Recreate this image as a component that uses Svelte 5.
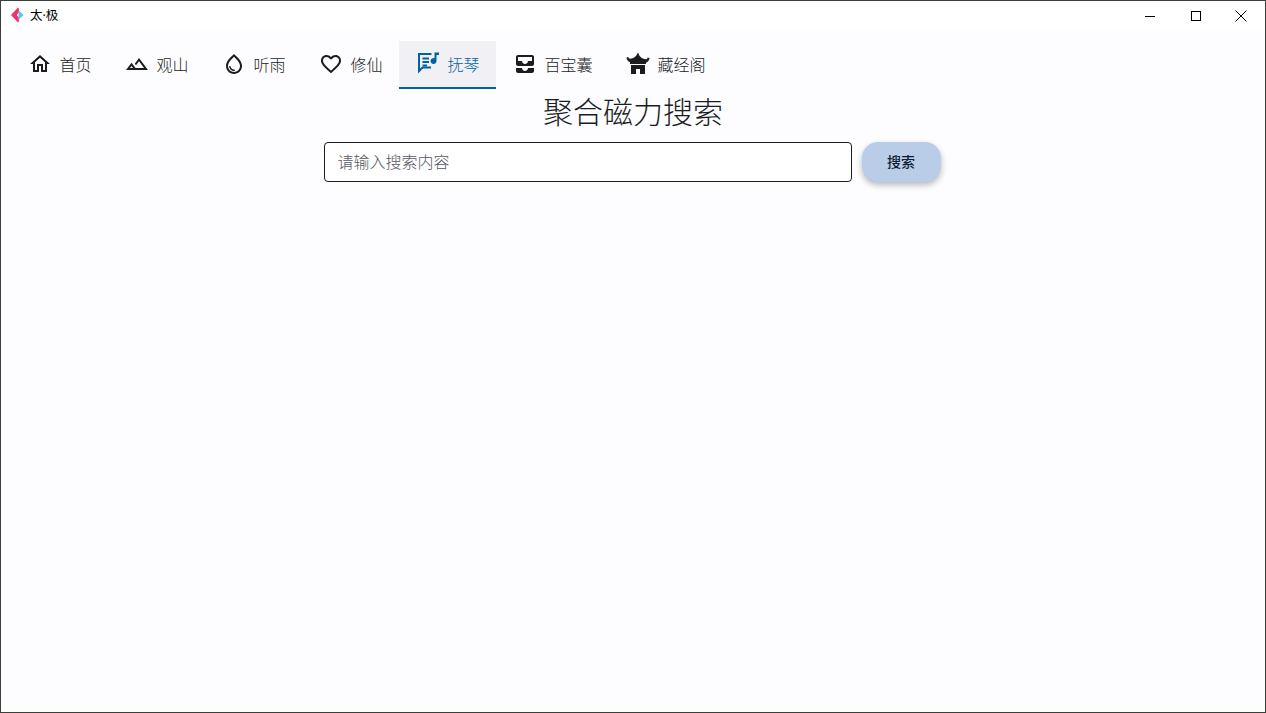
<script>
  const tabs = [
    { label: '首页', icon: 'home' },
    { label: '观山', icon: 'terrain' },
    { label: '听雨', icon: 'drop' },
    { label: '修仙', icon: 'heart' },
    { label: '抚琴', icon: 'lyrics', active: true },
    { label: '百宝囊', icon: 'inbox' },
    { label: '藏经阁', icon: 'temple' }
  ];

  const icons = {
    home: 'M12 5.69l5 4.5V18h-2v-6H9v6H7v-7.81l5-4.5M12 3L2 12h3v8h6v-6h2v6h6v-8h3L12 3z',
    terrain: 'M14 6l-4.22 5.63 1.25 1.67L14 9.33 19 16h-8.46l-4.01-5.37L1 18h22L14 6zM5 16l1.52-2.03L8.04 16H5z',
    drop: 'M12,2c-5.33,4.55-8,8.48-8,11.8c0,4.98,3.8,8.2,8,8.2s8-3.22,8-8.2C20,10.48,17.33,6.55,12,2z M12,20c-3.35,0-6-2.57-6-6.2c0-2.34,1.95-5.44,6-9.14c4.05,3.7,6,6.79,6,9.14C18,17.43,15.35,20,12,20z M7.83,14c0.37,0,0.67,0.26,0.74,0.62c0.41,2.22,2.28,2.98,3.64,2.87c0.43-0.02,0.79,0.32,0.79,0.75c0,0.4-0.32,0.73-0.72,0.75c-2.13,0.13-4.62-1.09-5.19-4.12C7.01,14.42,7.37,14,7.83,14z',
    heart: 'M16.5 3c-1.74 0-3.41.81-4.5 2.09C10.91 3.81 9.24 3 7.5 3 4.42 3 2 5.42 2 8.5c0 3.78 3.4 6.86 8.55 11.54L12 21.35l1.45-1.32C18.6 15.36 22 12.28 22 8.5 22 5.42 19.58 3 16.5 3zm-4.4 15.55l-.1.1-.1-.1C7.14 14.24 4 11.39 4 8.5 4 6.5 5.5 5 7.5 5c1.54 0 3.04.99 3.57 2.36h1.87C13.46 5.99 14.96 5 16.5 5c2 0 3.5 1.5 3.5 3.5 0 2.89-3.14 5.74-7.9 10.05z',
    lyrics: 'M2 2h13.500v2H4v13.600L6.200 15.400H15v2H7l-5 5V2zM6.500 6.500H13v2H6.500zM6.500 10H13v2H6.500zM6.500 13.500H11v1.800H6.500zM18.500 1.500H23v2.400h-2.500V10a3 3 0 1 1-2-2.800V1.500z',
    inbox: 'M19 3H5c-1.100 0-2 .9-2 2v7c0 1.100.9 2 2 2h14c1.100 0 2-.9 2-2V5c0-1.100-.9-2-2-2zm0 6h-4c0 1.620-1.380 3-3 3s-3-1.380-3-3H5V5h14v4zm-4 7h6v3c0 1.100-.9 2-2 2H5c-1.100 0-2-.9-2-2v-3h6c0 1.660 1.340 3 3 3s3-1.340 3-3z',
    temple: 'M12 0.500l1.600 3.500c2 2.200 4.300 3.200 6.600 3.200.7 0 1.200-.7 1.400-1.700l1.900.5c-.3 2.400-1.500 4-3.500 4.800V12H4.000v-1.700C2 9.500.8 7.900.5 5.500l1.900-.5c.2 1 .7 1.700 1.400 1.700 2.300 0 4.600-1 6.600-3.200L12 0.500zM5 13h14v9h-5v-5h-4v5H5v-9z'
  };
</script>

<div class="window">
  <header class="titlebar">
    <div class="brand">
      <svg class="logo" viewBox="0 0 14 16" width="14" height="16" aria-hidden="true">
        <path d="M13.500 8 8.500 3.200v9.600z" fill="#5cc1f4" />
        <path d="M8 0.500 1 8l7 7.500c.8-.6 1-1.300 1-2.200l-.5-3L6.800 8l1.700-2.300.5-3c0-.9-.2-1.600-1-2.200z" fill="#f0336f" />
      </svg>
      <span class="app-name">太·极</span>
    </div>
    <div class="controls">
      <button aria-label="最小化">
        <svg viewBox="0 0 12 12" width="12" height="12"><path d="M1 6.500h10" stroke="#000" fill="none" /></svg>
      </button>
      <button aria-label="最大化">
        <svg viewBox="0 0 12 12" width="12" height="12"><rect x="1.500" y="1.500" width="9" height="9" stroke="#000" fill="none" /></svg>
      </button>
      <button aria-label="关闭">
        <svg viewBox="0 0 12 12" width="12" height="12"><path d="M.5.500l11 11M11.500.500l-11 11" stroke="#000" fill="none" /></svg>
      </button>
    </div>
  </header>

  <nav class="tabs">
    {#each tabs as tab}
      <div class="tab" class:active={tab.active}>
        <svg viewBox="0 0 24 24" width="24" height="24" aria-hidden="true"><path d={icons[tab.icon]} /></svg>
        <span>{tab.label}</span>
      </div>
    {/each}
  </nav>

  <main class="page">
    <h1>聚合磁力搜索</h1>
    <div class="search">
      <input type="text" placeholder="请输入搜索内容" />
      <button class="go">搜索</button>
    </div>
  </main>
</div>

<style>
  :global(body) {
    background: #fdfcff;
  }

  .window {
    height: 713px;
    box-sizing: border-box;
    display: flex;
    flex-direction: column;
    border: 1px solid #3a3f3a;
    background: #fdfcff;
    font-family: "Noto Sans CJK SC", "Noto Sans", sans-serif;
    overflow: hidden;
  }

  .titlebar {
    height: 29px;
    flex: none;
    display: flex;
    justify-content: space-between;
    background: #fff;
  }

  .brand {
    display: flex;
    align-items: center;
    gap: 6px;
    padding-left: 9px;
    padding-bottom: 2px;
  }

  .app-name {
    font-family: "Noto Sans", "Noto Sans CJK SC", sans-serif;
    font-size: 12.500px;
    color: #000;
  }

  .controls {
    display: flex;
    margin-right: 1px;
  }

  .controls button {
    width: 45.500px;
    padding: 0;
    border: 0;
    background: none;
    display: flex;
    align-items: center;
    justify-content: center;
  }

  .tabs {
    display: flex;
    margin-top: 11px;
    padding-left: 10px;
  }

  .tab {
    height: 48px;
    box-sizing: border-box;
    display: flex;
    align-items: center;
    gap: 8px;
    padding: 0 16.500px 2px;
    color: #1a1c1e;
    font-size: 16px;
    font-weight: 300;
    line-height: 24px;
  }

  .tab svg {
    fill: #1a1c1e;
  }

  .tab.active {
    background: #f1f0f4;
    border-bottom: 2px solid #0061a4;
    padding-bottom: 0;
    color: #0061a4;
  }

  .tab.active svg {
    fill: #0061a4;
    margin-top: -2px;
  }

  .page {
    display: flex;
    flex-direction: column;
    align-items: center;
  }

  h1 {
    margin: 1px 0 0;
    font-size: 30px;
    font-weight: 300;
    line-height: 40px;
    color: #1a1c1e;
  }

  .search {
    display: flex;
    gap: 10px;
    margin-top: 12px;
    margin-right: 2px;
  }

  input {
    width: 528px;
    height: 40px;
    box-sizing: border-box;
    padding: 0 12px 2px 13px;
    border: 1px solid #1a1c1e;
    border-radius: 4px;
    background: #fff;
    font: inherit;
    font-size: 16px;
    font-weight: 300;
    outline: none;
  }

  input::placeholder {
    color: #55585f;
    opacity: 1;
  }

  .go {
    width: 79px;
    height: 40px;
    padding: 0 0 2px;
    border: 0;
    border-radius: 16px;
    background: #b9cde8;
    color: #0f1d35;
    font: inherit;
    font-size: 14px;
    font-weight: 500;
    box-shadow: 0 3px 6px rgba(0, 0, 0, 0.28);
  }
</style>
